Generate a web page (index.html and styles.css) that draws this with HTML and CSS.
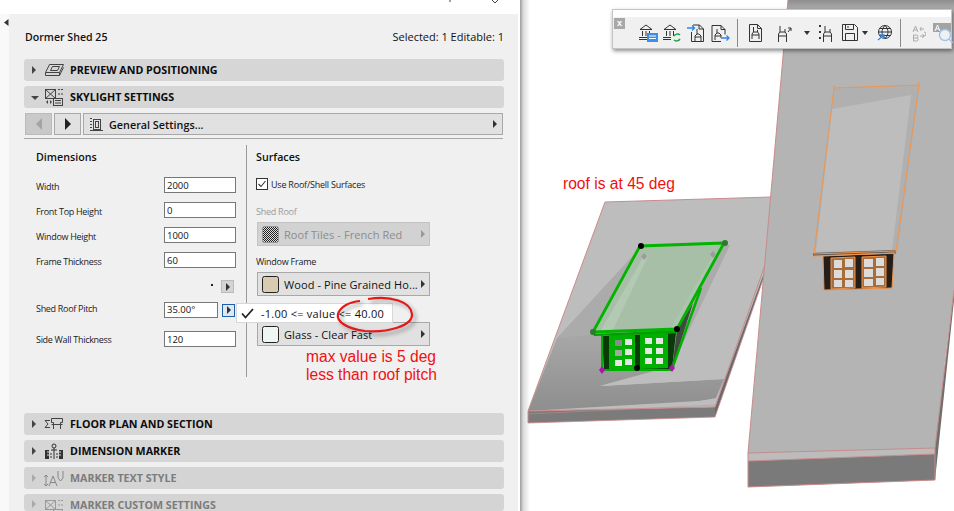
FILE: index.html
```html
<!DOCTYPE html>
<html lang="en">
<head>
<meta charset="utf-8">
<title>Dormer Shed 25</title>
<link rel="stylesheet" href="styles.css">
</head>
<body>
<div class="page">
  <section class="panel">
    <div class="titlebar">
      <svg class="win-marks" width="60" height="14" viewBox="0 0 60 14"><path d="M12 0v2" stroke="#444"/><path d="M54 0l3 3M60 0l-3 3" stroke="#444" fill="none"/></svg>
    </div>
    <div class="body">
      <div class="rail"><svg class="rail-arrow" width="5" height="7" viewBox="0 0 5 7"><path d="M4.500 0v7L0 3.500z" fill="#333"/></svg></div>
      <div class="content">
        <div class="top-row"><strong class="name">Dormer Shed 25</strong><span class="count">Selected: 1 Editable: 1</span></div>

        <div class="head">
          <i class="tri-r"></i>
          <svg class="head-icon" width="20" height="16" viewBox="0 0 20 16"><g fill="none" stroke="#444"><path d="M1.500 10.500L5.500 2.500H19.500L15.500 10.500Z"/><path d="M1.500 10.500V13.500H15.500L19.500 5.500"/><path d="M15.500 10.500V13.500"/><path d="M6.500 8.500L8.500 4.500H15.500L13.500 8.500Z"/></g></svg>
          <span>PREVIEW AND POSITIONING</span>
        </div>
        <div class="head">
          <i class="tri-d"></i>
          <svg class="head-icon" width="20" height="18" viewBox="0 0 20 18"><g fill="none" stroke="#444"><rect x="1.500" y="1.500" width="10" height="9"/><path d="M1.500 10.500L11.500 1.500M1.500 1.500L11.500 10.500"/><rect x="9.500" y="10.500" width="9" height="7" fill="#d6d6d6"/><path d="M11 12.500h6M11 15h6"/><path d="M14 1.500h5M14 6h5" stroke-dasharray="2 1"/></g><path d="M2 14l2-2v4zM8 14l-2-2v4z" fill="#444"/></svg>
          <span>SKYLIGHT SETTINGS</span>
        </div>

        <div class="nav-row">
          <button class="nav-btn off" type="button"><i class="nav-l"></i></button>
          <button class="nav-btn" type="button"><i class="nav-r"></i></button>
          <div class="nav-select">
            <svg width="15" height="15" viewBox="0 0 15 15"><g fill="none" stroke="#444"><rect x="4.500" y="2.500" width="7" height="10"/><rect x="6.500" y="4.500" width="3" height="6"/><path d="M1 1.500h2M1 4.500h2M1 7.500h2M1 10.500h2M1 13.500h13"/></g></svg>
            <span class="nav-text">General Settings...</span>
            <i class="tri-s"></i>
          </div>
        </div>
        <div class="rule"></div>

        <div class="columns">
          <div class="col-left">
            <h3 class="col-title">Dimensions</h3>
            <div class="field first"><label>Width</label><span class="input">2000</span></div>
            <div class="field"><label>Front Top Height</label><span class="input">0</span></div>
            <div class="field"><label>Window Height</label><span class="input">1000</span></div>
            <div class="field"><label>Frame Thickness</label><span class="input">60</span></div>
            <div class="mini-row"><span class="dot"></span><span class="mini-btn"><i class="tri-s"></i></span></div>
            <div class="field pitch"><label>Shed Roof Pitch</label><span class="input short">35.00°</span><span class="mini-btn active"><i class="tri-s"></i></span></div>
            <div class="field wall"><label>Side Wall Thickness</label><span class="input">120</span></div>
          </div>
          <div class="col-right">
            <h3 class="col-title shift">Surfaces</h3>
            <div class="check-row">
              <svg class="check" width="12" height="12" viewBox="0 0 12 12"><rect x=".5" y=".5" width="11" height="11" fill="#fff" stroke="#333"/><path d="M2.500 6l2.500 2.500 4.500-5.500" fill="none" stroke="#333" stroke-width="1.100"/></svg>
              <span>Use Roof/Shell Surfaces</span>
            </div>
            <div class="surf-label dim">Shed Roof</div>
            <div class="surface disabled">
              <svg class="swatch" width="17" height="17" viewBox="0 0 17 17"><defs><pattern id="chk" width="2" height="2" patternUnits="userSpaceOnUse"><rect width="2" height="2" fill="#ddd"/><rect width="1" height="1" fill="#222"/><rect x="1" y="1" width="1" height="1" fill="#222"/></pattern></defs><rect x=".5" y=".5" width="16" height="16" rx="2" fill="url(#chk)" stroke="#999"/></svg>
              <span class="surf-name">Roof Tiles - French Red</span><i class="tri-s"></i>
            </div>
            <div class="surf-label">Window Frame</div>
            <div class="surface">
              <svg class="swatch" width="17" height="17" viewBox="0 0 17 17"><rect x=".5" y=".5" width="16" height="16" rx="2" fill="#d9cbb0" stroke="#222"/></svg>
              <span class="surf-name">Wood - Pine Grained Ho...</span><i class="tri-s"></i>
            </div>
            <div class="surface glass">
              <svg class="swatch" width="17" height="17" viewBox="0 0 17 17"><rect x=".5" y=".5" width="16" height="16" rx="2" fill="#eff5f1" stroke="#222"/></svg>
              <span class="surf-name">Glass - Clear Fast</span><i class="tri-s"></i>
            </div>
          </div>
        </div>

        <div class="head">
          <i class="tri-r"></i>
          <svg class="head-icon" width="20" height="14" viewBox="0 0 20 14"><g fill="none" stroke="#444"><path d="M1 3.500h5M6 3.500H1l3 3.500-3 3.500h5"/><path d="M9.500 12V5.500h-2v-4h11v4h-2V12M7.500 7.500h11" /></g></svg>
          <span>FLOOR PLAN AND SECTION</span>
        </div>
        <div class="head">
          <i class="tri-r"></i>
          <svg class="head-icon" width="20" height="17" viewBox="0 0 20 17"><g fill="none" stroke="#333"><circle cx="10" cy="3" r="2"/><path d="M10 5v11M7 7h6"/><path d="M7 10v6M13 10v6" stroke-dasharray="2 1"/></g><path d="M1 7h4v9H1zM15 7h4v9h-4z" fill="#333"/><path d="M3 9h2M3 12h2M15 9h2M15 12h2" stroke="#ddd"/></svg>
          <span>DIMENSION MARKER</span>
        </div>
        <div class="head faded">
          <i class="tri-r"></i>
          <svg class="head-icon" width="20" height="17" viewBox="0 0 20 17"><g fill="none" stroke="#888"><path d="M2 5v11M0 7l2-2 2 2M0 14l2 2 2-2"/><path d="M5 16l4-10 4 10M6.500 12.500h5"/><path d="M14 1v7l2.500 3L19 8V1"/></g></svg>
          <span>MARKER TEXT STYLE</span>
        </div>
        <div class="head faded last">
          <i class="tri-r"></i>
          <svg class="head-icon" width="20" height="18" viewBox="0 0 20 18"><g fill="none" stroke="#999"><rect x="1.500" y="1.500" width="10" height="9"/><path d="M1.500 10.500L11.500 1.500M1.500 1.500L11.500 10.500"/><rect x="9.500" y="10.500" width="9" height="7"/><path d="M11 12.500h6M11 15h6"/><path d="M14 1.500h5M14 6h5" stroke-dasharray="2 1"/></g></svg>
          <span>MARKER CUSTOM SETTINGS</span>
        </div>
      </div>
    </div>

    <div class="tip">
      <svg width="13" height="11" viewBox="0 0 13 11"><path d="M1 5.500l3.500 4L12 1" fill="none" stroke="#222" stroke-width="1.800"/></svg>
      <span>-1.00 &lt;= value &lt;= 40.00</span>
    </div>
    <svg class="ring" width="96" height="52" viewBox="0 0 96 52"><defs><filter id="rs" x="-20%" y="-30%" width="140%" height="170%"><feGaussianBlur stdDeviation="2"/></filter></defs><path d="M37 5C60 1 80 8 81 20c1 12-25 19-47 17C17 35 5 28 7 20c2-7 11-12 22-13" fill="none" stroke="#000" stroke-opacity=".4" stroke-width="2" filter="url(#rs)" transform="translate(3 3)"/><path d="M37 5C60 1 80 8 81 20c1 12-25 19-47 17C17 35 5 28 7 20c2-7 11-12 22-13" fill="none" stroke="#e21a1a" stroke-width="2.200"/></svg>
    <p class="note note-max">max value is 5 deg<br>less than roof pitch</p>
  </section>

  <section class="viewport">
    <svg class="scene" width="434" height="511" viewBox="520 0 434 511">
      <defs>
        <linearGradient id="edge" x1="0" x2="1" y1="0" y2="0"><stop offset="0" stop-color="#9c9c9c"/><stop offset=".35" stop-color="#dcdcdc"/><stop offset="1" stop-color="#fff"/></linearGradient>
        <linearGradient id="lowshade" x1="0" x2="0" y1="0" y2="1"><stop offset="0" stop-color="#a8a8a8"/><stop offset="1" stop-color="#8e8e8e"/></linearGradient>
        <linearGradient id="topshade" x1="0" x2="0" y1="0" y2="1"><stop offset="0" stop-color="#8e8e8e"/><stop offset="1" stop-color="#b0b0b0"/></linearGradient>
      </defs>
      <rect x="520" y="0" width="10" height="511" fill="url(#edge)"/>

      <!-- left roof slab -->
      <polygon points="528,411 715,407 715,417 528,423" fill="#7b7b7b"/>
      <polygon points="715,407 765,262 765,274 715,417" fill="#6a6a6a"/>
      <polygon points="605,202 771,197 768,262 715,407 528,411" fill="#bdbdbd"/>
      <polygon points="557,338 640,248 730,245 672,366 604,372" fill="#a9a9a9" opacity=".9"/>
      <polygon points="557,338 604,333 672,366 603,385 600,386 724,379 715,400 528,411" fill="url(#lowshade)"/>
      <polygon points="602,386 655,372 724,379" fill="#bdbdbd"/>
      <polygon points="677,405 716,398 714,406" fill="#bdbdbd"/>
      <polyline points="528,423 528,411 605,202 771,197" fill="none" stroke="#c98b8b"/>
      <polyline points="528,411 715,407 766,262" fill="none" stroke="#c98b8b"/>
      <polyline points="528,423 715,417 765,274" fill="none" stroke="#c98b8b" stroke-opacity=".8"/>
      <line x1="528" y1="414" x2="715" y2="405" stroke="#c98b8b" stroke-opacity=".5"/>

      <!-- selected green dormer -->
      <polygon points="640,246 724,243 677,329 593,332" fill="#a7bfa7"/>
      <polygon points="600,332 644,256 648,256 612,332" fill="#bcd0bc" opacity=".6"/>
      <polygon points="670,330 713,255 716,255 680,330" fill="#bcd0bc" opacity=".3"/>
      <polygon points="602,336 676,333 672,369 604,370" fill="#0a3a0a"/>
      <polygon points="609,335 635,334 635,369 609,370" fill="#00b000"/>
      <polygon points="640,334 668,333 668,368 640,369" fill="#00b000"/>
      <g fill="#e6e6e6">
        <rect x="615" y="340" width="7" height="6" fill="#8c8c8c"/><rect x="625" y="339" width="7" height="6"/>
        <rect x="615" y="350" width="7" height="6" fill="#a5a5a5"/><rect x="625" y="349" width="7" height="6"/>
        <rect x="615" y="360" width="7" height="6"/><rect x="625" y="359" width="7" height="6"/>
        <rect x="645" y="338" width="7" height="6"/><rect x="656" y="338" width="7" height="6"/>
        <rect x="645" y="348" width="7" height="6"/><rect x="656" y="348" width="7" height="6"/>
        <rect x="645" y="358" width="7" height="6"/><rect x="656" y="358" width="7" height="6"/>
      </g>
      <polygon points="672,369 677,330 693,303" fill="#3d4a3d"/>
      <polyline points="672,369 701,288" fill="none" stroke="#00b000" stroke-width="2.500"/>
      <path d="M602 335V370H672" fill="none" stroke="#00b000" stroke-width="2"/>
      <polygon points="593,334 677,330 677,333 594,336" fill="#00a000"/>
      <polyline points="593,332 640,246 724,243 677,329 593,332" fill="none" stroke="#00b400" stroke-width="2.800" stroke-linejoin="round"/>
      <circle cx="593" cy="332" r="3" fill="#2f7a2f"/><circle cx="725" cy="243" r="3" fill="#2f7a2f"/>
      <circle cx="641" cy="246" r="3" fill="#000"/><circle cx="677" cy="329" r="3" fill="#000"/><circle cx="637" cy="368" r="3" fill="#000"/>
      <g fill="#b012b0"><path d="M602 366l3 4-3 4-3-4z"/><path d="M672 364l3 4-3 4-3-4z"/></g>
      <g fill="#a09aa0"><path d="M644 253l3 3.500-3 3.500-3-3.500z"/><path d="M713 251l3 3.500-3 3.500-3-3.500z"/></g>

      <!-- right roof slab -->
      <polygon points="788,0 954,0 954,290 945,360 935,480 748,487 748,453" fill="#b4b4b4"/>
      <rect x="788" y="0" width="166" height="10" fill="url(#topshade)"/>
      <polygon points="748,461 935,454 935,480 748,487" fill="#7a7a7a"/>
      <polygon points="748,453 935,448 935,454 748,461" fill="#bcbcbc"/>
      <polygon points="935,448 954,290 954,300 935,480" fill="#6f6f6f"/>
      <polyline points="788,0 748,453 748,487 935,480 935,448 954,290" fill="none" stroke="#c98b8b"/>
      <polyline points="748,453 935,448" fill="none" stroke="#c98b8b"/>
      <polyline points="748,461 935,454" fill="none" stroke="#c98b8b"/>

      <!-- orange dormer -->
      <polygon points="834,88 919,85 898,252 814,254" fill="#b0b0b0"/>
      <polygon points="832,109 911,95 892,250 816,252" fill="#bdbdbd"/>
      <polygon points="823,256 894,253 892,288 824,290" fill="#241d18"/>
      <polygon points="831,258 855,257 855,288 831,289" fill="#a86d3a" stroke="#f0954c"/>
      <polygon points="862,257 886,256 886,287 862,288" fill="#a86d3a" stroke="#f0954c"/>
      <g fill="#dcdcdc">
        <rect x="834" y="260" width="8" height="8"/><rect x="845" y="259" width="8" height="8"/>
        <rect x="834" y="270" width="8" height="8"/><rect x="845" y="270" width="8" height="8"/>
        <rect x="834" y="280" width="8" height="7"/><rect x="845" y="280" width="8" height="7"/>
        <rect x="864" y="259" width="9" height="8"/><rect x="876" y="258" width="8" height="8"/>
        <rect x="864" y="269" width="9" height="8"/><rect x="876" y="268" width="8" height="8"/>
        <rect x="864" y="279" width="9" height="7"/><rect x="876" y="278" width="8" height="7"/>
      </g>
      <polygon points="813,253 896,250 896,254 813,256" fill="#5c5c5c"/>
      <g fill="none" stroke="#f0954c">
        <polyline points="834,85 834,88 919,85 919,82"/>
        <polyline points="834,88 814,254 896,251 919,85"/>
        <line x1="813" y1="256" x2="896" y2="253"/>
        <polygon points="823,256 894,253 892,288 824,290"/>
      </g>
    </svg>

    <p class="note note-roof">roof is at 45 deg</p>

    <div class="toolbar">
      <div class="tb-strip"></div>
      <div class="tb-body">
        <span class="tb-close">x</span>
        <div class="tb-group first">
          <svg width="20" height="20" viewBox="0 0 20 20"><g fill="none" stroke="#333"><path d="M2 6.500L8 2l6 4.500z"/><path d="M4.500 8v5M8 8v5M11.500 8v5M1 14.500h13M1 16.500h10" /></g><rect x="9" y="10" width="11" height="9" fill="#3c8fe8"/><path d="M11 13h7M11 15.500h7" stroke="#fff"/></svg>
          <svg width="20" height="20" viewBox="0 0 20 20"><g fill="none" stroke="#333"><path d="M2 6.500L8 2l6 4.500z"/><path d="M4.500 8v5M8 8v5M11.500 8v5M1 14.500h8M1 16.500h8"/></g><g fill="none" stroke="#1aa64a" stroke-width="1.500"><path d="M12 13a4 4 0 0 1 6-1M18 16a4 4 0 0 1-6 1"/></g></svg>
          <svg width="20" height="20" viewBox="0 0 20 20"><path d="M1 5h7M6 2.500L8.500 5 6 7.500" fill="none" stroke="#2e86e8" stroke-width="1.300"/><g fill="none" stroke="#333"><path d="M5.500 9v9.500h12V6l-4-4H7M13 2v4h4.500"/><path d="M9 18v-5l2-2h2l2 2v5M9 14h6M11 6v5"/></g></svg>
          <svg width="20" height="20" viewBox="0 0 20 20"><g fill="none" stroke="#333"><path d="M2 18.500V2.500h9l4 4v5M11 2.500v4h4M2 18.500h9"/><path d="M5 17v-5l2-2h2l2 2v3M5 13h6M7 6v4"/></g><path d="M11 15h8M16.500 12.500L19 15l-2.500 2.500" fill="none" stroke="#2e86e8" stroke-width="1.300"/></svg>
        </div>
        <span class="tb-sep"></span>
        <div class="tb-group second">
          <svg width="15" height="20" viewBox="0 0 15 20"><g fill="none" stroke="#333"><path d="M1.500 18.500V1.500h8l4 4v13zM9.500 1.500v4h4" stroke-linejoin="round"/><path d="M4 16v-5l1.500-2h4l1.500 2v5M4 12h7M5.500 4v5M9.500 7v2"/></g></svg>
          <svg class="gap-l" width="17" height="20" viewBox="0 0 17 20"><g fill="none" stroke="#333"><path d="M1.500 19v-8l1.500-2h5l1.500 2v8M1.500 13h8M3 3v6M8 6v3"/><path d="M11 9l3-4M14 8V5h-3"/></g></svg>
          <i class="tb-caret"></i>
          <svg class="gap-m" width="15" height="20" viewBox="0 0 15 20"><g fill="none" stroke="#333"><path d="M5.500 19v-8l1.500-2h5l1.500 2v8M5.500 13h8M7 3v6M12 6v3"/></g><path d="M1 2h2v2H1zM1 8h2v2H1zM1 14h2v2H1z" fill="#333"/></svg>
          <svg class="gap-s" width="16" height="17" viewBox="0 0 16 17"><g fill="none" stroke="#333"><path d="M.500.500h12l3 3v13H.500z"/><path d="M3.500.500v5h8v-5M3.500 16.500v-7h9v7M6 2v2"/></g></svg>
          <i class="tb-caret near"></i>
          <svg class="gap-g" width="16" height="17" viewBox="0 0 16 17"><g fill="none" stroke="#333"><circle cx="8" cy="8" r="6.500"/><path d="M1.500 8h13M8 1.500c-4 4-4 9 0 13M8 1.500c4 4 4 9 0 13M2.500 4.500h11M2.500 11.500h11"/></g><path d="M1 16l6-5M3 11h4v4" fill="none" stroke="#2e86e8" stroke-width="1.300"/></svg>
        </div>
        <span class="tb-sep"></span>
        <div class="tb-group third">
          <svg width="14" height="18" viewBox="0 0 14 18"><g fill="none" stroke="#aaa"><path d="M1 8l2.500-6L6 8M2 6h3M1.500 11v6h3a1.500 1.500 0 0 0 0-3h-3M4.500 14a1.500 1.500 0 0 0 0-3h-3"/><path d="M12 5H8M9.500 3L8 5l1.500 2M8 12h4a2 2 0 0 0 0-4M10.500 10l1.500 2-1.500 2"/></g></svg>
          <svg width="20" height="20" viewBox="0 0 20 20"><rect width="18" height="9" fill="#a3a3a3"/><path d="M2 8l2.500-6L7 8M3 6h3" fill="none" stroke="#fff"/><circle cx="12" cy="12" r="5.500" fill="#f0f0f0" stroke="#9cc4ee" stroke-width="1.400"/><path d="M16 16l4 4" stroke="#9cc4ee" stroke-width="1.400"/></svg>
        </div>
      </div>
    </div>
  </section>
</div>
</body>
</html>
```

FILE: styles.css
```css
* { box-sizing: border-box; }
html, body { margin: 0; padding: 0; background: #fff; }
body { font-family: "Open Sans", "Noto Sans", "Liberation Sans", sans-serif; color: #111; }
i { display: block; font-style: normal; }

.page { display: flex; width: 954px; height: 511px; overflow: hidden; position: relative; }

/* settings panel */
.panel { position: relative; flex: none; width: 520px; height: 511px; display: flex; flex-direction: column; overflow: hidden; }
.titlebar { flex: none; height: 14px; background: #fff; display: flex; justify-content: flex-end; padding-right: 22px; }
.win-marks { display: block; }
.body { flex: 1; display: flex; min-height: 0; }
.rail { flex: none; width: 9px; background: #f9f9f9; padding: 5px 0 0 4px; }
.rail-arrow { display: block; }
.content { flex: none; width: 510px; background: #f0f0f0; padding: 0 14px 0 15px; border-right: 1px solid #fff; }

.top-row { display: flex; justify-content: space-between; align-items: center; height: 45px; padding: 14px 0 13px 1px; font-size: 11px; line-height: 18px; }
.name { font-weight: 600; font-size: 10.600px; }
.count { color: #111; }

.head { display: flex; align-items: center; height: 22px; margin-bottom: 5px; padding-left: 8px; background: #d6d6d6; border-radius: 3px; font-size: 10.700px; font-weight: 700; color: #0c0c0c; }
.head.last { margin-bottom: 0; height: 17px; align-items: flex-start; padding-top: 5px; }
.head.faded { background: #d4d4d4; color: #7c7c7c; }
.head span { margin-left: 6px; line-height: 14px; white-space: nowrap; }
.head.last span { line-height: 12px; }
.head.last .tri-r { margin-top: 1px; }
.head-icon { flex: none; margin-left: 8px; width: 20px; display: block; }
.tri-r { width: 0; height: 0; border-style: solid; border-width: 4px 0 4px 4px; border-color: transparent transparent transparent #444; flex: none; }
.tri-d { width: 0; height: 0; margin-top: 1px; border-style: solid; border-width: 4px 4px 0; border-color: #444 transparent transparent; flex: none; margin-left: -1px; margin-right: -3px; }
.head.faded .tri-r { border-left-color: #aaa; }
.tri-s { width: 0; height: 0; border-style: solid; border-width: 4px 0 4px 4px; border-color: transparent transparent transparent #333; flex: none; }

.nav-row { display: flex; gap: 2px; height: 22px; margin: 1px 1px 0 1px; }
.nav-btn { width: 27px; height: 22px; padding: 0; margin: 0; border: 1px solid #a8a8a8; background: #e1e1e1; display: flex; align-items: center; justify-content: center; }
.nav-btn.off { background: #c9c9c9; border-color: #bbb; }
.nav-l { width: 0; height: 0; border-style: solid; border-width: 6px 6px 6px 0; border-color: transparent #a4a4a4 transparent transparent; }
.nav-r { width: 0; height: 0; border-style: solid; border-width: 6px 0 6px 6px; border-color: transparent transparent transparent #222; }
.nav-select { flex: 1; height: 22px; display: flex; align-items: center; padding: 0 5px 0 5px; background: #e1e1e1; border: 1px solid #a8a8a8; font-size: 10.800px; font-weight: 600; }
.nav-text { flex: 1; margin-left: 5px; }
.rule { height: 1px; margin-top: 3px; background: #a8a8a8; width: 479px; }

.columns { display: flex; height: 232px; margin-top: 6px; margin-bottom: 36px; }
.col-left { flex: none; width: 222px; padding-left: 12px; }
.col-right { flex: 1; border-left: 1px solid #9a9a9a; padding-left: 10px; }
.col-title { margin: 0; height: 22px; line-height: 24px; font-size: 10.700px; font-weight: 600; color: #111; }
.col-title.shift { margin-left: -1px; }

.field { display: flex; align-items: center; height: 16px; margin-top: 9px; font-size: 9px; letter-spacing: -.3px; }
.field.first { margin-top: 10px; }
.field label { flex: none; width: 128px; color: #222; padding-top: 3px; }
.field.pitch label { padding-top: 0; padding-bottom: 3px; }
.field.wall label { padding-top: 1px; }
.input { display: block; width: 72px; height: 16px; background: #fff; border: 1px solid #777; padding: 1px 0 0 2px; font-size: 9.500px; letter-spacing: 0; line-height: 14px; color: #111; }
.input.short { width: 54px; height: 16px; padding-top: 0; }
.mini-row { display: flex; align-items: center; justify-content: flex-end; height: 13px; margin-top: 12px; padding-right: 12px; position: relative; }
.dot { width: 2px; height: 2px; background: #222; margin-right: 8px; margin-top: -4px; }
.mini-btn { width: 13px; height: 13px; background: #d4d4d4; border: 1px solid #bbb; display: flex; align-items: center; justify-content: center; }
.mini-btn.active { background: #dfe8f2; border: 1px solid #1d5fa8; margin-left: 4px; }
.field.pitch { margin-top: 9px; }
.field.wall { margin-top: 13px; }

.check-row { display: flex; align-items: center; height: 14px; margin-top: 10px; margin-left: -1px; font-size: 9px; letter-spacing: -.22px; color: #222; }
.check { flex: none; margin-right: 3px; display: block; }
.surf-label { height: 14px; margin-top: 9px; margin-left: -1px; line-height: 14px; font-size: 9px; letter-spacing: -.25px; color: #222; }
.surf-label.dim { color: #9a9a9a; margin-top: 14px; }
.surface { display: flex; align-items: center; width: 173px; height: 24px; margin-top: 3px; padding: 0 4px 0 4px; background: #e1e1e1; border: 1px solid #a8a8a8; font-size: 11px; color: #111; }
.surface.disabled { background: #d2d2d2; border-color: #c4c4c4; color: #8c8c8c; }
.surface.disabled .tri-s { border-left-color: #999; }
.surface.glass { margin-top: 26px; }
.swatch { flex: none; margin-right: 5px; display: block; }
.surf-name { flex: 1; white-space: nowrap; letter-spacing: .08px; }

/* callouts over the panel */
.tip { position: absolute; left: 236px; top: 303px; width: 157px; height: 20px; display: flex; align-items: center; padding-left: 4px; background: #fff; border: 1px solid #d8d8d8; font-size: 11px; color: #111; }
.tip svg { flex: none; margin-right: 7px; display: block; }
.tip span { letter-spacing: .25px; white-space: nowrap; }
.ring { position: absolute; left: 331px; top: 294px; display: block; }
.note { position: absolute; margin: 0; font-family: "Liberation Sans", Arial, sans-serif; font-size: 15.600px; line-height: 18px; color: #f01010; }
.note-max { left: 306px; top: 348px; }
.note-roof { left: 43px; top: 175px; white-space: nowrap; }

/* 3D view */
.viewport { position: relative; flex: 1; height: 511px; overflow: hidden; background: #fff; }
.scene { display: block; position: absolute; left: 0; top: 0; }

.toolbar { position: absolute; left: 92px; top: 9px; width: 340px; height: 40px; box-shadow: 1px 2px 4px rgba(0,0,0,.45); border: 1px solid #c4c4c4; background: #f0f0f0; }
.tb-strip { height: 7px; background: #fff; }
.tb-body { display: flex; align-items: center; height: 31px; position: relative; }
.tb-close { position: absolute; left: 1px; top: 1px; width: 11px; height: 11px; background: #a8a8a8; color: #fff; font: 700 9px/10px "Liberation Sans", Arial, sans-serif; text-align: center; }
.tb-group { display: flex; align-items: center; }
.tb-group svg { display: block; flex: none; }
.tb-group.first { gap: 4px; margin-left: 25px; }
.tb-group.second { margin-left: 10px; }
.tb-group.third { gap: 7px; margin-left: 11px; }
.tb-sep { width: 1px; height: 28px; margin-left: 7px; background: #8a8a8a; flex: none; }
.gap-l { margin-left: 14px; }
.gap-m { margin-left: 8px; }
.gap-s { margin-left: 9px; }
.gap-g { margin-left: 9px; }
.tb-caret { width: 0; height: 0; margin-left: 10px; border-style: solid; border-width: 4px 3.500px 0; border-color: #333 transparent transparent; flex: none; }
.tb-caret.near { margin-left: 4px; }
```
